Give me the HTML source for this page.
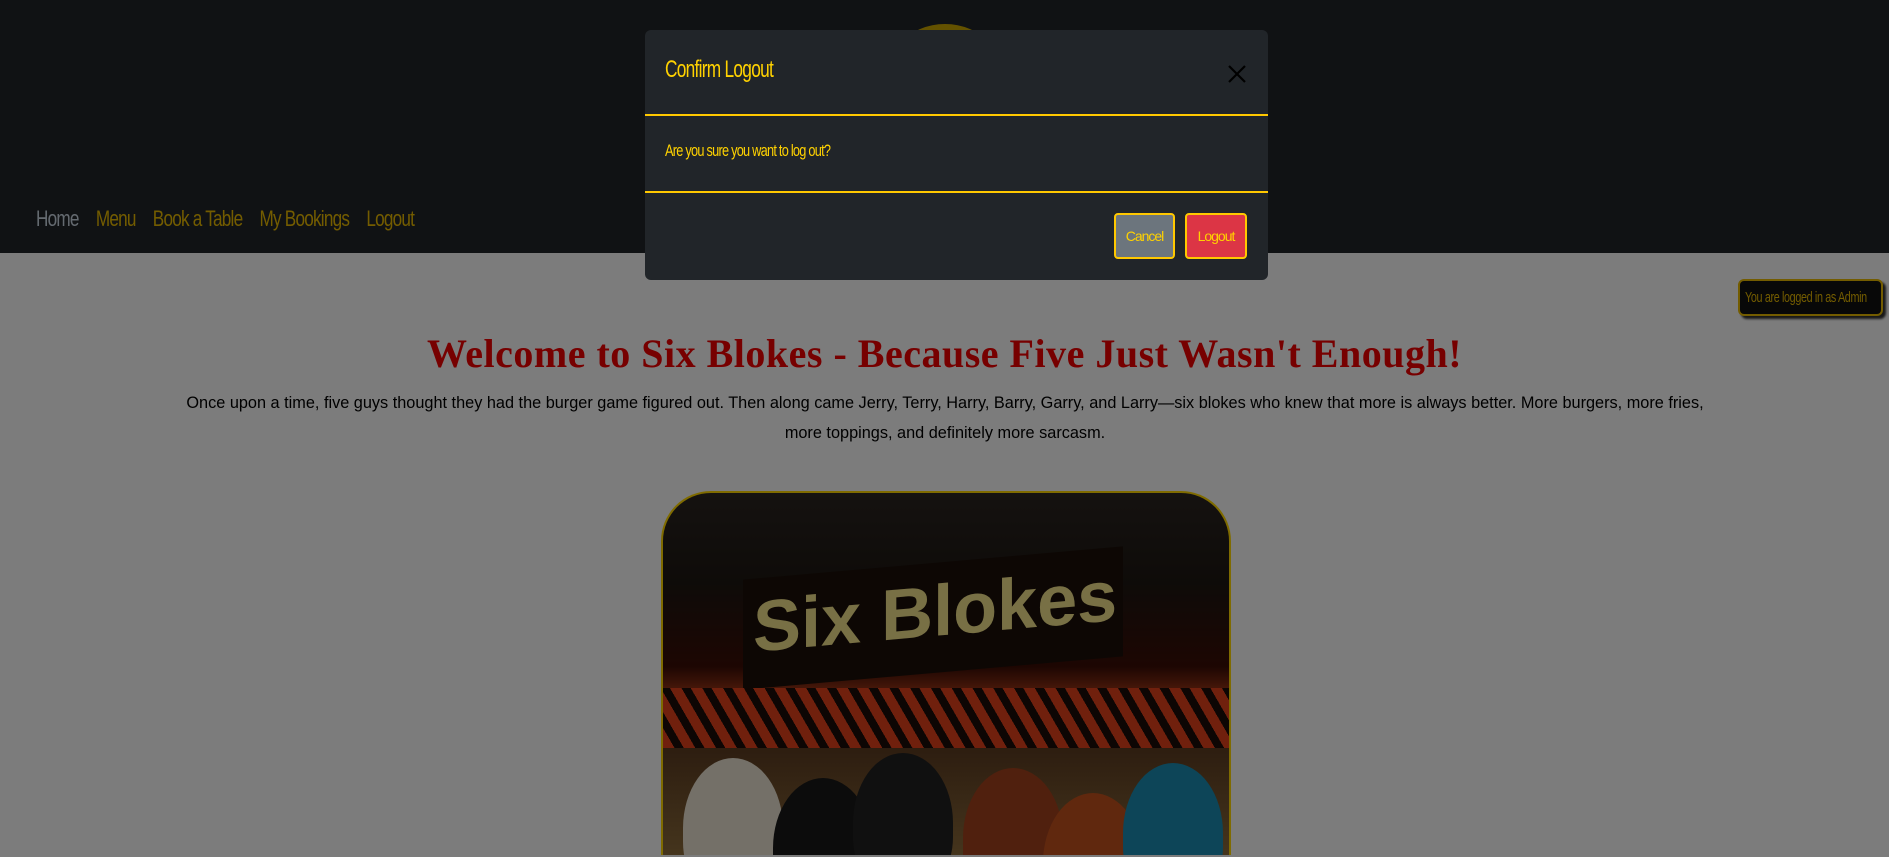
<!DOCTYPE html>
<html><head><meta charset="utf-8"><style>
*{box-sizing:border-box;margin:0;padding:0}
html,body{width:1889px;height:857px;overflow:hidden}
body{background:#fff;font-family:"Liberation Sans",sans-serif;position:relative}
.hdr{position:absolute;left:0;top:0;width:1889px;height:253px;background:#212529}
.logo{position:absolute;left:880px;top:24px;width:130px;height:130px;border-radius:50%;background:#c8a400}
.nav{position:absolute;left:36px;top:206px;font-size:22px;letter-spacing:-1px;white-space:nowrap;transform:scaleX(.78);transform-origin:left}
.nav span{margin-right:22px;color:#e6b800}
.nav span.h{color:#c9d4e0}
.main{position:absolute;left:0;top:253px;width:1889px;height:604px;background:#f8f8f8}
h1{position:absolute;left:0;width:1889px;top:330px;text-align:center;font-family:"Liberation Serif",serif;font-weight:bold;font-size:40px;letter-spacing:.5px;color:#ee0000;white-space:nowrap}
p{position:absolute;left:185px;width:1520px;top:388px;text-align:center;font-size:16.3px;line-height:30px;color:#000}
.pic{position:absolute;left:661px;top:491px;width:570px;height:364px;border:2px solid #ffd700;border-bottom:none;border-radius:50px 50px 0 0;overflow:hidden;background:linear-gradient(#2a2420 0,#1d1712 25%,#3a0d05 48%,#c2451c 58%,#5a3a20 70%,#8a6a3a 100%)}
.sign{position:absolute;left:80px;top:70px;width:380px;height:110px;background:#1a0f08;transform:skewY(-5deg)}
.sign b{position:absolute;left:10px;top:8px;font-size:72px;color:#f0e08a;font-family:"Liberation Sans",sans-serif}
.awn{position:absolute;left:0;top:195px;width:570px;height:60px;background:repeating-linear-gradient(60deg,#e0401a 0 10px,#1a0d08 10px 18px)}
.heads{position:absolute;top:255px;left:0;width:570px;height:109px;overflow:hidden}
.heads i{position:absolute;border-radius:50% 50% 40% 40%;width:100px;height:140px}
.badge{position:absolute;left:1738px;top:279px;width:145px;height:37px;background:#111;border:2px solid #e6b800;border-radius:6px;box-shadow:3px 3px 2px #333;overflow:hidden}
.badge span{display:block;white-space:nowrap;color:#e6b800;font-size:15px;line-height:33px;transform:scaleX(.72);transform-origin:left;padding-left:7px;letter-spacing:-.5px}
.ov{position:absolute;left:0;top:0;width:1889px;height:857px;background:rgba(0,0,0,.5)}
.modal{position:absolute;left:645px;top:30px;width:623px;height:250px;background:#212529;border-radius:6px}
.mt{position:absolute;left:20px;top:26px;font-size:24px;color:#ffd200;letter-spacing:-1px;white-space:nowrap;transform:scaleX(.72);transform-origin:left}
.x{position:absolute;left:582px;top:34px;width:20px;height:20px}
.l1{position:absolute;left:0;top:84px;width:623px;height:2px;background:#ffc800}
.l2{position:absolute;left:0;top:161px;width:623px;height:2px;background:#ffc800}
.mb{position:absolute;left:20px;top:111px;font-size:17px;color:#ffd200;letter-spacing:-1px;white-space:nowrap;transform:scaleX(.75);transform-origin:left}
.btn{position:absolute;top:183px;height:46px;border:2px solid #ffc800;border-radius:4px;font-size:14px;color:#ffd200;text-align:center;line-height:42px;letter-spacing:-1px}
</style></head><body>
<div class="hdr"><div class="logo"></div>
<div class="nav"><span class="h">Home</span><span>Menu</span><span>Book a Table</span><span>My Bookings</span><span>Logout</span></div></div>
<div class="main"></div>
<h1>Welcome to Six Blokes - Because Five Just Wasn't Enough!</h1>
<p>Once upon a time, five guys thought they had the burger game figured out. Then along came Jerry, Terry, Harry, Barry, Garry, and Larry—six blokes who knew that more is always better. More burgers, more fries, more toppings, and definitely more sarcasm.</p>
<div class="pic"><div class="sign"><b>Six Blokes</b></div><div class="awn"></div>
<div class="heads"><i style="left:20px;top:10px;background:#e8e0d0"></i><i style="left:110px;top:30px;background:#181818"></i><i style="left:190px;top:5px;background:#202020"></i><i style="left:300px;top:20px;background:#a0401c"></i><i style="left:380px;top:45px;background:#c0501c"></i><i style="left:460px;top:15px;background:#1a8ab0"></i></div></div>
<div class="badge"><span>You are logged in as Admin</span></div>
<div class="ov"></div>
<div class="modal">
<div class="mt">Confirm Logout</div>
<svg class="x" viewBox="0 0 20 20"><path d="M2 2L18 18M18 2L2 18" stroke="#000" stroke-width="2.2"/></svg>
<div class="l1"></div>
<div class="mb">Are you sure you want to log out?</div>
<div class="l2"></div>
<div class="btn" style="left:469px;width:61px;background:#6c757d">Cancel</div>
<div class="btn" style="left:540px;width:62px;background:#dc3545">Logout</div>
</div>
</body></html>
